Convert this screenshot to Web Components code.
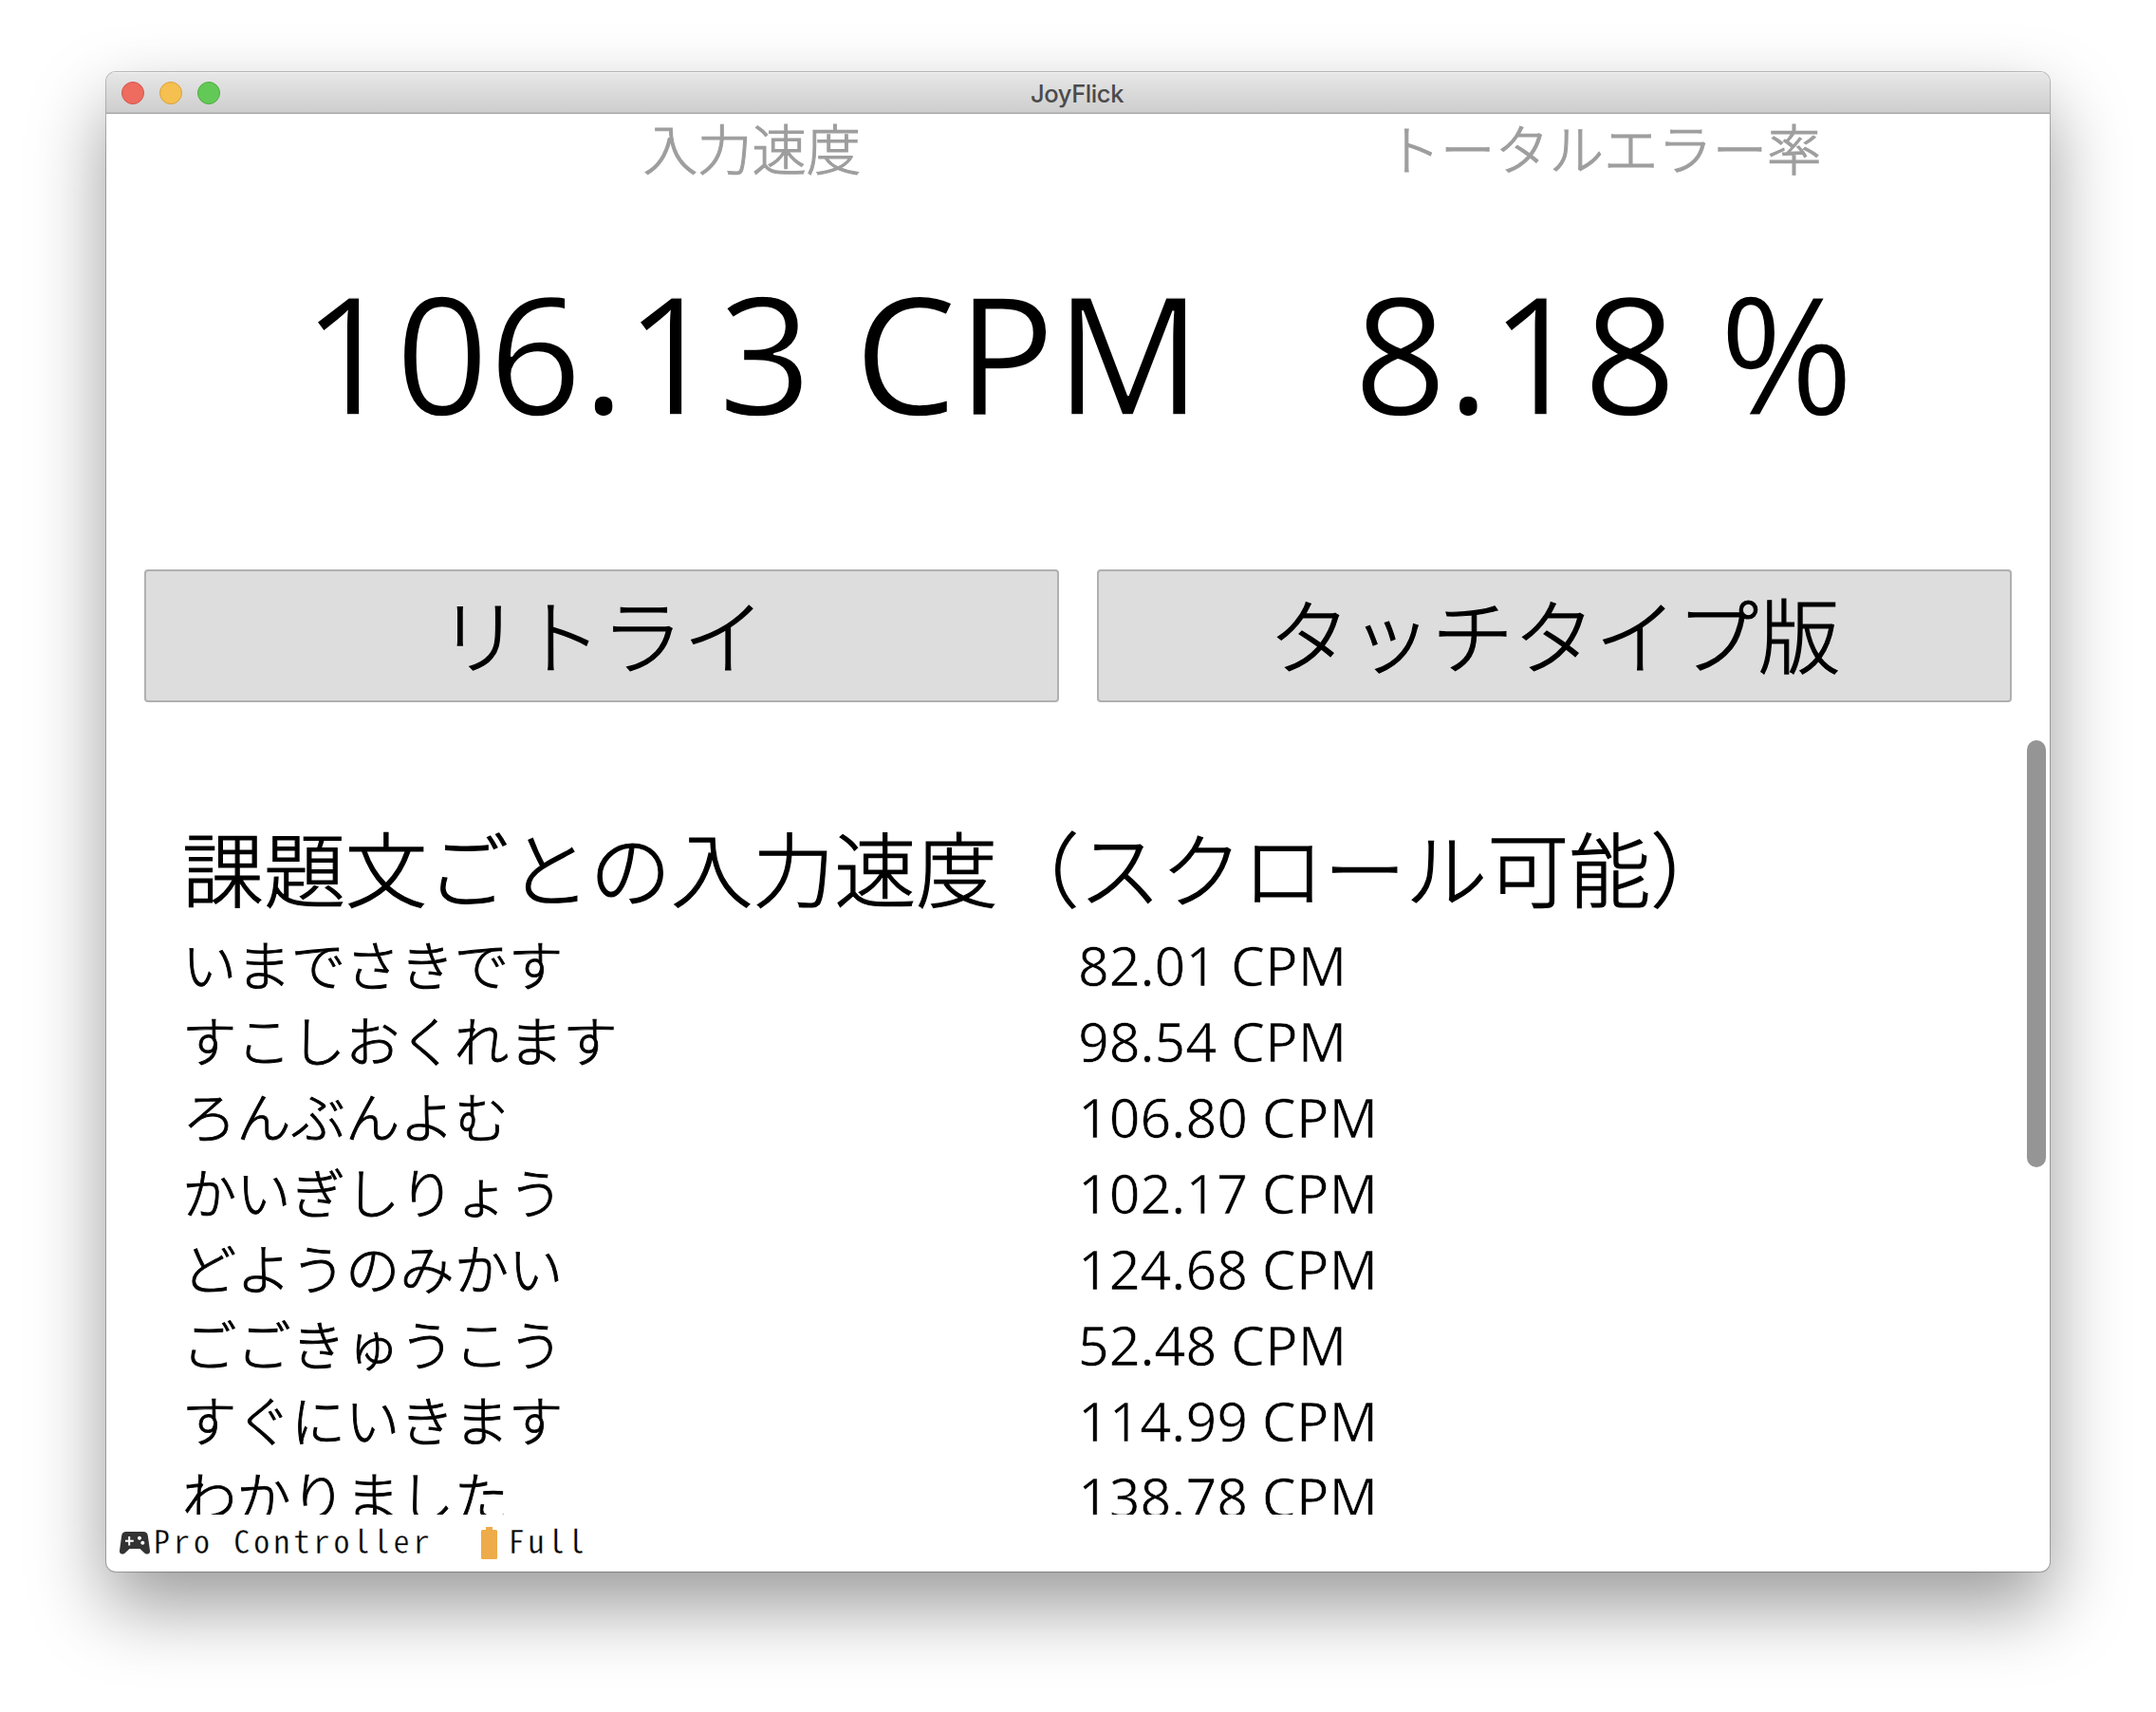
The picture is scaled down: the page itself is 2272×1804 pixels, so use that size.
<!DOCTYPE html>
<html lang="ja">
<head>
<meta charset="utf-8">
<title>JoyFlick</title>
<style>
html,body{margin:0;background:#fff;}
body{width:2272px;height:1804px;overflow:hidden;box-sizing:border-box;padding:76px 112px 148px;font-family:"Open Sans","Noto Sans CJK JP",sans-serif;color:#000;}
</style>
</head>
<body>
<joy-window heading="JoyFlick">
  <metric-row>
    <metric-value label="入力速度">106.13 CPM</metric-value>
    <metric-value label="トータルエラー率">8.18 %</metric-value>
  </metric-row>
  <button-row>
    <joy-button>リトライ</joy-button>
    <joy-button>タッチタイプ版</joy-button>
  </button-row>
  <result-list heading="課題文ごとの入力速度（スクロール可能）">
    <result-item speed="82.01 CPM">いまでさきです</result-item>
    <result-item speed="98.54 CPM">すこしおくれます</result-item>
    <result-item speed="106.80 CPM">ろんぶんよむ</result-item>
    <result-item speed="102.17 CPM">かいぎしりょう</result-item>
    <result-item speed="124.68 CPM">どようのみかい</result-item>
    <result-item speed="52.48 CPM">ごごきゅうこう</result-item>
    <result-item speed="114.99 CPM">すぐにいきます</result-item>
    <result-item speed="138.78 CPM">わかりました</result-item>
  </result-list>
  <status-bar controller="Pro Controller" battery="Full"></status-bar>
</joy-window>
<script>
const define = (name, render) => customElements.define(name, class extends HTMLElement {
  connectedCallback() {
    if (!this.shadowRoot) this.attachShadow({ mode: "open" }).innerHTML = render(this);
  }
});

define("joy-window", el => `
<style>
:host{display:flex;flex-direction:column;height:1580px;border-radius:10px;overflow:hidden;background:#fff;
  box-shadow:0 0 0 1px rgba(0,0,0,.2),0 0 2px rgba(0,0,0,.2),0 36px 80px rgba(0,0,0,.4);}
header{flex:none;box-sizing:border-box;height:44px;display:grid;grid-template-columns:1fr auto 1fr;align-items:center;padding:0 16px;
  background:linear-gradient(#e7e7e7,#cdcdcd);box-shadow:inset 0 1px #f4f4f4,inset 0 -1px #a8a8a8,inset 0 -2px #bdbdbd;}
.lights{display:flex;gap:16px;}
.lights i{width:22px;height:22px;border-radius:50%;border:1px solid;}
.r{background:#ed6b5f;border-color:#d5544a!important}
.y{background:#f5c04f;border-color:#d9a03c!important}
.g{background:#63c956;border-color:#4fab42!important}
b{font:500 25.5px/42px Inter,sans-serif;letter-spacing:-.4px;color:#4a4a4a;padding:2px 2px 0 0}
</style>
<header><span class="lights"><i class="r"></i><i class="y"></i><i class="g"></i></span><b>${el.getAttribute("heading")}</b><span></span></header>
<slot></slot>`);

define("metric-row", () => `
<style>:host{display:flex;justify-content:center;gap:160px;height:480px;flex:none}</style><slot></slot>`);

define("metric-value", el => `
<style>
:host{display:flex;flex-direction:column;align-items:center;white-space:nowrap}
.label{font-size:57.33px;line-height:72px;padding-top:1px;font-weight:300;-webkit-text-stroke:1.1px;color:#9e9e9e}
.value{font-size:172px;line-height:234px;margin-top:60px;-webkit-text-stroke:1.4px #fff}
</style>
<div class="label">${el.getAttribute("label")}</div><div class="value"><slot></slot></div>`);

define("button-row", () => `
<style>:host{display:grid;grid-template-columns:1fr 1fr;gap:40px;padding:0 40px;flex:none}</style><slot></slot>`);

define("joy-button", () => `
<style>
:host{display:flex;justify-content:center;align-items:center;box-sizing:border-box;height:140px;background:#ddd;border:2px solid #b0b0b0;border-radius:4px;font-size:86px;line-height:120px;padding-top:1px;font-weight:300;-webkit-text-stroke:1.2px}
</style><slot></slot>`);

define("result-list", el => `
<style>
:host{display:flex;flex:1;min-height:0;margin-top:40px;overflow:hidden}
.body{flex:1;padding:76px 56px 0 80px;min-width:0}
h2{margin:0;font-size:86px;line-height:121px;font-weight:300;-webkit-text-stroke:1.2px;white-space:nowrap}
.track{width:20px;margin-right:4px}
.thumb{height:450px;border-radius:10px;background:#959595}
</style>
<div class="body"><h2>${el.getAttribute("heading")}</h2><slot></slot></div>
<div class="track"><div class="thumb"></div></div>`);

define("result-item", el => `
<style>
:host{display:grid;grid-template-columns:944px 1fr;height:80px;font-size:57.33px;line-height:80px;white-space:nowrap}
.name{font-weight:300;-webkit-text-stroke:.9px}
.speed{-webkit-text-stroke:.5px #fff}
</style>
<span class="name"><slot></slot></span><span class="speed">${el.getAttribute("speed")}</span>`);

define("status-bar", el => `
<style>
:host{display:flex;align-items:center;flex:none;height:60px;box-sizing:border-box;padding:0 0 0 14px;
  font-family:"Noto Sans Mono CJK JP","DejaVu Sans Mono",monospace;font-size:34px;letter-spacing:4.05px;line-height:52px;white-space:pre;-webkit-text-stroke:.4px #fff}
svg{flex:none;display:block}
.pad{margin-right:4px}
.bat{margin:0 12px 0 50px}
span{padding-bottom:6px}
</style>
<svg class="pad" width="32" height="24" viewBox="0 0 32 24"><path fill="#333" fill-rule="evenodd" d="M7 0h18c2.700 0 4.400 1.200 4.800 4L32 20c.4 3.800-4 4.700-6 2.200L21.500 18h-11L6 22.200C4 24.700-.4 23.800 0 20L2.200 4C2.600 1.200 4.300 0 7 0zM9.200 5v3.800H6v2h3.200v3.700h2v-3.700h3.600v-2h-3.600V5zM21 4.700a2 2 0 1 0 .01 0zM24.300 9.700a2 2 0 1 0 .01 0z"/></svg><span>${el.getAttribute("controller")}</span>
<svg class="bat" width="17" height="34" viewBox="0 0 17 34"><path fill="#eeab49" d="M5 0h7v3h3.500q1.500 0 1.500 1.500v28q0 1.500-1.500 1.500h-14q-1.500 0-1.500-1.500v-28q0-1.500 1.500-1.500H5z"/></svg><span>${el.getAttribute("battery")}</span>`);
</script>
</body>
</html>
